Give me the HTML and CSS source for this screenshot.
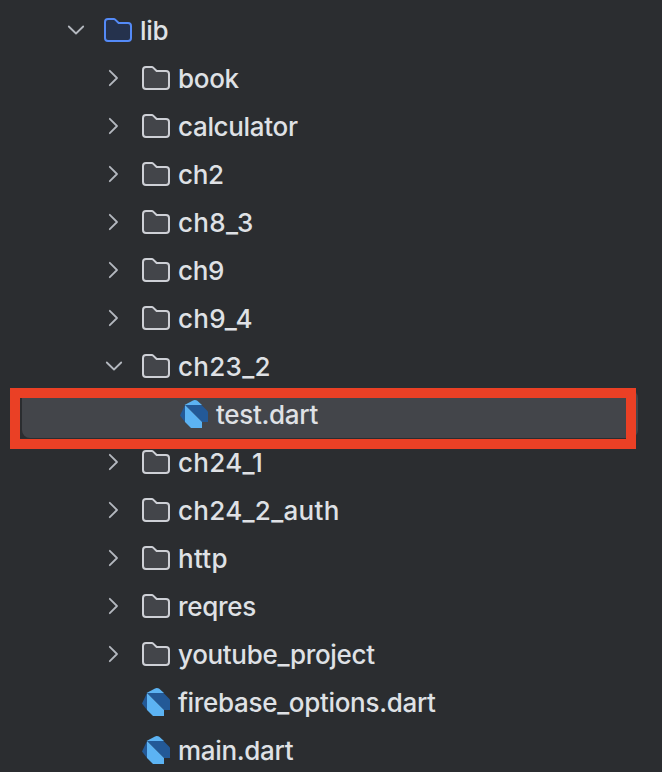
FILE: index.html
```
<!DOCTYPE html>
<html lang="en">
<head>
    <meta charset="UTF-8">
    <meta name="viewport" content="width=device-width, initial-scale=1.0">
    <title>Project</title>
    <link rel="stylesheet" href="styles.css">
</head>
<body>
    <svg class="defs" width="0" height="0">
        <symbol id="right" viewBox="0 0 32 32">
            <path d="M11.8 8.8L19 16L11.8 23.2" fill="none" stroke="#b4b8bf" stroke-width="1.8" stroke-linecap="round" stroke-linejoin="round"/>
        </symbol>
        <symbol id="down" viewBox="0 0 32 32">
            <path d="M8.8 12.5L16 19.5L23.2 12.5" fill="none" stroke="#b4b8bf" stroke-width="1.8" stroke-linecap="round" stroke-linejoin="round"/>
        </symbol>
        <symbol id="folder" viewBox="0 0 32 32">
            <path d="M3 8a3 3 0 0 1 3-3h5.8a2 2 0 0 1 1.4.6L16.6 9H26a3 3 0 0 1 3 3v12a3 3 0 0 1-3 3H6a3 3 0 0 1-3-3z" stroke-width="2"/>
        </symbol>
        <symbol id="dart" viewBox="0 0 28 28">
            <path d="M0 15.5L5 5V22z" fill="#235997"/>
            <path d="M4.5 5L13 .4Q15 -.5 17 .6L22 5z" fill="#5cb3f3"/>
            <path d="M5 5H21.5L28 11.5V22H22z" fill="#235997"/>
            <path d="M5 5L22 22V28H11L5 22z" fill="#5cb3f3"/>
        </symbol>
    </svg>

    <div class="tree">
        <div class="row">
            <svg class="arrow"><use href="#down"/></svg>
            <svg class="icon folder source"><use href="#folder"/></svg>
            <span class="name">lib</span>
        </div>
        <div class="row level-2">
            <svg class="arrow"><use href="#right"/></svg>
            <svg class="icon folder"><use href="#folder"/></svg>
            <span class="name">book</span>
        </div>
        <div class="row level-2">
            <svg class="arrow"><use href="#right"/></svg>
            <svg class="icon folder"><use href="#folder"/></svg>
            <span class="name">calculator</span>
        </div>
        <div class="row level-2">
            <svg class="arrow"><use href="#right"/></svg>
            <svg class="icon folder"><use href="#folder"/></svg>
            <span class="name">ch2</span>
        </div>
        <div class="row level-2">
            <svg class="arrow"><use href="#right"/></svg>
            <svg class="icon folder"><use href="#folder"/></svg>
            <span class="name section">ch8_3</span>
        </div>
        <div class="row level-2">
            <svg class="arrow"><use href="#right"/></svg>
            <svg class="icon folder"><use href="#folder"/></svg>
            <span class="name">ch9</span>
        </div>
        <div class="row level-2">
            <svg class="arrow"><use href="#right"/></svg>
            <svg class="icon folder"><use href="#folder"/></svg>
            <span class="name section">ch9_4</span>
        </div>
        <div class="row level-2">
            <svg class="arrow"><use href="#down"/></svg>
            <svg class="icon folder"><use href="#folder"/></svg>
            <span class="name section">ch23_2</span>
        </div>
        <div class="row level-3 selected">
            <svg class="icon dart"><use href="#dart"/></svg>
            <span class="name">test.dart</span>
            <div class="highlight"></div>
        </div>
        <div class="row level-2">
            <svg class="arrow"><use href="#right"/></svg>
            <svg class="icon folder"><use href="#folder"/></svg>
            <span class="name section">ch24_1</span>
        </div>
        <div class="row level-2">
            <svg class="arrow"><use href="#right"/></svg>
            <svg class="icon folder"><use href="#folder"/></svg>
            <span class="name section">ch24_2_auth</span>
        </div>
        <div class="row level-2">
            <svg class="arrow"><use href="#right"/></svg>
            <svg class="icon folder"><use href="#folder"/></svg>
            <span class="name section">http</span>
        </div>
        <div class="row level-2">
            <svg class="arrow"><use href="#right"/></svg>
            <svg class="icon folder"><use href="#folder"/></svg>
            <span class="name">reqres</span>
        </div>
        <div class="row level-2">
            <svg class="arrow"><use href="#right"/></svg>
            <svg class="icon folder"><use href="#folder"/></svg>
            <span class="name">youtube_project</span>
        </div>
        <div class="row level-2 file">
            <svg class="icon dart"><use href="#dart"/></svg>
            <span class="name">firebase_options.dart</span>
        </div>
        <div class="row level-2 file">
            <svg class="icon dart"><use href="#dart"/></svg>
            <span class="name">main.dart</span>
        </div>
    </div>
</body>
</html>
```
FILE: styles.css
```
body {
    margin: 0;
    background-color: #2b2d30;
    color: #dfe1e5;
    font-family: Inter, "Liberation Sans", sans-serif;
    font-size: 26px;
    font-weight: 500;
    letter-spacing: -0.32px;
    font-feature-settings: "calt" 0;
    overflow: hidden;
}

.defs {
    position: absolute;
}

.tree {
    padding: 6px 24px 0 22px;
}

.row {
    display: flex;
    align-items: center;
    box-sizing: border-box;
    height: 48px;
    padding-left: 38px;
    border-radius: 8px;
}

.level-2 {
    padding-left: 76px;
}

.level-2.file {
    padding-left: 118px;
}

.level-3 {
    padding-left: 156px;
}

.selected {
    position: relative;
    background-color: #43454a;
}

.arrow {
    width: 32px;
    height: 32px;
    margin-right: 10px;
}

.icon {
    width: 32px;
    height: 32px;
    margin-right: 6px;
}

.folder {
    fill: #43454a;
    stroke: #ced0d6;
}

.folder.source {
    fill: #25324d;
    stroke: #548af7;
}

.dart {
    box-sizing: border-box;
    padding: 2px;
}

.name {
    padding-top: 2px;
    line-height: 32px;
    white-space: nowrap;
}

.name.section {
    letter-spacing: 0.3px;
}

/* red frame around the selected file */
.highlight {
    position: absolute;
    top: -2px;
    left: -12px;
    box-sizing: border-box;
    width: 626px;
    height: 61px;
    border: 10px solid #ea4025;
}
```
